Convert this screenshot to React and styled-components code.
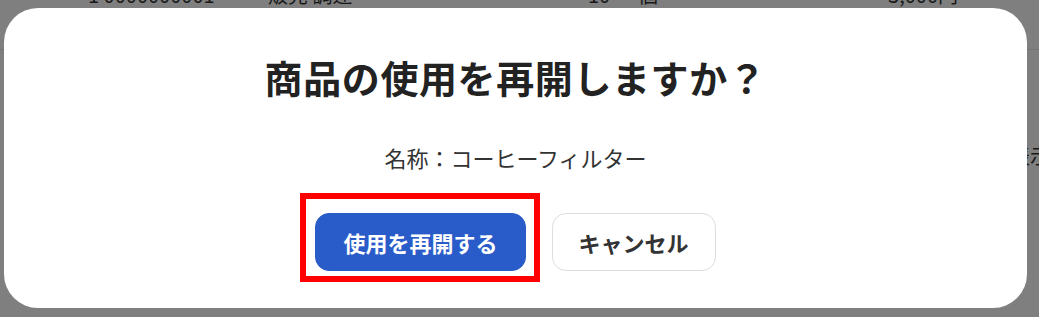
import React from "react";
import styled, { createGlobalStyle } from "styled-components";

const Global = createGlobalStyle`
  html, body { margin: 0; padding: 0; background: #ffffff; overflow: hidden; }
  body { font-family: "Noto Sans CJK JP", "Noto Sans", sans-serif; width: 1039px; height: 317px; }
`;

const Page = styled.div`
  width: 1080px;
  height: 317px;
  color: #333333;
  font-family: "Noto Sans CJK JP", "Noto Sans", sans-serif;
`;

const TableRow = styled.div`
  display: flex;
  align-items: flex-start;
  height: ${(p) => p.$h}px;
  margin-top: ${(p) => p.$mt || 0}px;
  border-bottom: ${(p) => (p.$line ? "1px solid #e8e8e8" : "none")};
  box-sizing: border-box;
  font-size: 20px;
  line-height: 22px;
`;

const Cell = styled.div`
  width: ${(p) => p.$w}px;
  padding-top: ${(p) => p.$pt || 0}px;
  text-align: ${(p) => p.$align || "left"};
  flex-shrink: 0;
  white-space: nowrap;
`;

const Overlay = styled.div`
  position: fixed;
  inset: 0;
  background: rgba(0, 0, 0, 0.5);
  padding: 8px 12px 0 4px;
  display: flex;
  align-items: flex-start;
`;

const Modal = styled.div`
  width: 1023px;
  height: 300px;
  background: #ffffff;
  border-radius: 34px;
  box-sizing: border-box;
  padding-top: 43px;
  display: flex;
  flex-direction: column;
  align-items: center;
`;

const Title = styled.h2`
  margin: 0;
  font-size: 38px;
  line-height: 52px;
  letter-spacing: 0.6px;
  font-weight: 700;
  color: #222222;
`;

const Name = styled.p`
  margin: 39px 0 0;
  font-size: 22px;
  line-height: 30px;
  color: #333333;
`;

const Actions = styled.div`
  margin-top: 41px;
  display: flex;
  gap: 26px;
`;

const Highlight = styled.div`
  position: relative;
  &::after {
    content: "";
    position: absolute;
    top: -20px;
    left: -15px;
    right: -14px;
    bottom: -11px;
    border: 6px solid #ff0000;
    pointer-events: none;
  }
`;

const Button = styled.button`
  height: 58px;
  padding: 0 ${(p) => (p.$primary ? 27 : 26)}px;
  border-radius: 14px;
  border: 1px solid ${(p) => (p.$primary ? "#2a5cc9" : "#dddddd")};
  background: ${(p) => (p.$primary ? "#2a5cc9" : "#ffffff")};
  color: ${(p) => (p.$primary ? "#ffffff" : "#333333")};
  font-family: "Noto Sans CJK JP", "Noto Sans", sans-serif;
  font-size: 22px;
  font-weight: 700;
  cursor: pointer;
  box-sizing: border-box;
`;

export default function App() {
  return (
    <>
      <Global />
      <Page>
        <TableRow $h={66} $mt={-16} $line>
          <Cell $w={88} />
          <Cell $w={180}>1 0000000001</Cell>
          <Cell $w={320}>販売 調達</Cell>
          <Cell $w={50}>10</Cell>
          <Cell $w={240}>個</Cell>
          <Cell $w={80} $align="right">3,000円</Cell>
        </TableRow>
        <TableRow $h={120}>
          <Cell $w={1010} />
          <Cell $w={60} $pt={95}>表示</Cell>
        </TableRow>
      </Page>
      <Overlay>
        <Modal role="dialog">
          <Title>商品の使用を再開しますか？</Title>
          <Name>名称：コーヒーフィルター</Name>
          <Actions>
            <Highlight>
              <Button $primary>使用を再開する</Button>
            </Highlight>
            <Button>キャンセル</Button>
          </Actions>
        </Modal>
      </Overlay>
    </>
  );
}
